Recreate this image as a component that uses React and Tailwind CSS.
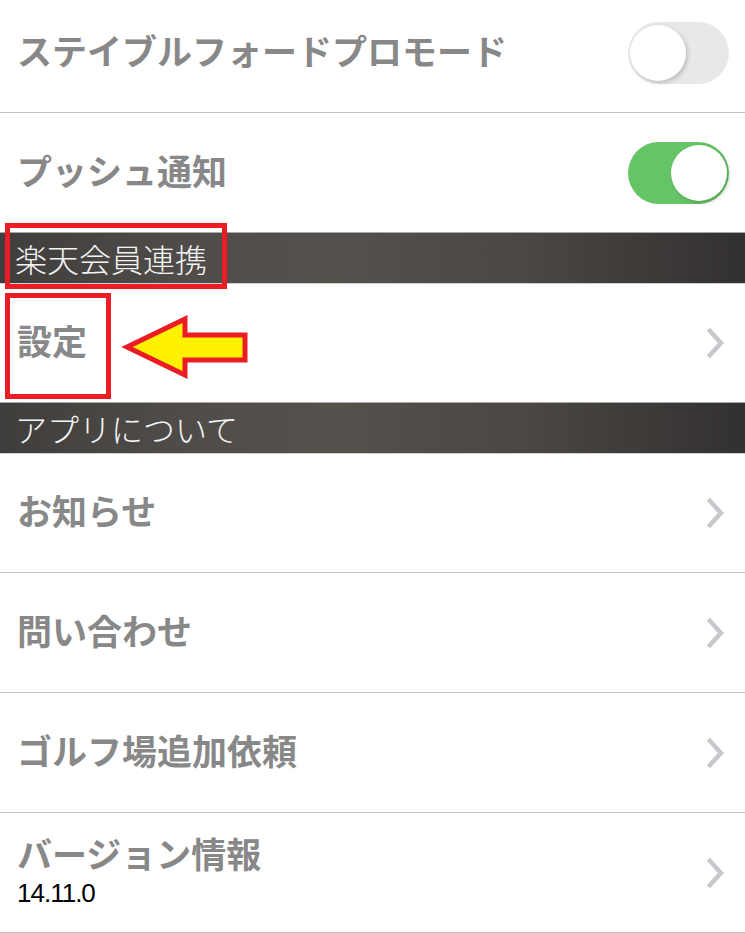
import React from 'react';

const Chevron = () => (
  <svg width="20" height="32" viewBox="0 0 20 32" className="mr-[19px]">
    <path d="M4 4 L15 16 L4 28" fill="none" stroke="#c7c7cc" strokeWidth="4.5" strokeLinecap="square" />
  </svg>
);

const Toggle = ({ on }) => (
  <div
    className={`w-[101px] h-[62px] rounded-full flex items-center px-[2px] mr-[16px] ${
      on ? 'bg-[#65c466] justify-end' : 'bg-[#e8e8e8] justify-start'
    }`}
  >
    <div className="w-[56px] h-[56px] rounded-full bg-white shadow-[2px_2px_4px_rgba(0,0,0,0.18)]" />
  </div>
);

const SectionHeader = ({ title }) => (
  <div className="h-[52px] flex flex-col">
    <div className="h-px bg-[#a8a8a8]" />
    <div className="flex-1 flex items-center pl-[15px] bg-[linear-gradient(90deg,#403e3c,#4f4c49_25%,#55514d_45%,#4a4744_70%,#333130)]">
      <span className="text-[#f4f4f4] text-[32px] leading-none font-light">{title}</span>
    </div>
    <div className="h-px bg-[#cfcfcf]" />
  </div>
);

const Row = ({ label, height = 'h-[119px]', right, sub, divider = true }) => (
  <>
    <div className={`${height} flex items-center justify-between pl-[17px]`}>
      {sub ? (
        <div className="flex flex-col mb-[5px]">
          <span className="text-[#888888] text-[35px] font-bold leading-[36px]">{label}</span>
          <span className="mt-[9px] text-black text-[26px] tracking-[-1px] leading-[26px] font-['Liberation_Sans',sans-serif]">
            {sub}
          </span>
        </div>
      ) : (
        <span className="mb-[6px] text-[#888888] text-[35px] font-bold leading-[40px]">{label}</span>
      )}
      {right}
    </div>
    {divider && <div className="h-px bg-[#c4c4c4]" />}
  </>
);

export default function App() {
  return (
    <div className="relative w-[745px] h-[933px] overflow-hidden bg-white font-['Noto_Sans_CJK_JP',sans-serif]">
      <div className="h-[112px] flex items-center justify-between pl-[17px] pb-[6px]">
        <span className="mb-[6px] text-[#888888] text-[35px] font-bold leading-[40px]">ステイブルフォードプロモード</span>
        <Toggle on={false} />
      </div>
      <div className="h-px bg-[#c4c4c4]" />
      <Row label="プッシュ通知" right={<Toggle on />} divider={false} />
      <SectionHeader title="楽天会員連携" />
      <Row label="設定" height="h-[118px]" right={<Chevron />} divider={false} />
      <SectionHeader title="アプリについて" />
      <Row label="お知らせ" height="h-[118px]" right={<Chevron />} />
      <Row label="問い合わせ" right={<Chevron />} />
      <Row label="ゴルフ場追加依頼" right={<Chevron />} />
      <Row label="バージョン情報" sub="14.11.0" right={<Chevron />} />

      {/* annotations */}
      <div className="absolute left-[5px] top-[223px] w-[222px] h-[66px] border-[5px] border-[#ec1c24]" />
      <div className="absolute left-[5px] top-[293px] w-[106px] h-[106px] border-[5px] border-[#ec1c24]" />
      <svg className="absolute left-0 top-0" width="260" height="400" viewBox="0 0 260 400">
        <polygon
          points="127,347 185,319 185,335 245,335 245,360 185,360 185,375"
          fill="#fff200"
          stroke="#ec1c24"
          strokeWidth="5"
          strokeLinejoin="miter"
        />
      </svg>
    </div>
  );
}
